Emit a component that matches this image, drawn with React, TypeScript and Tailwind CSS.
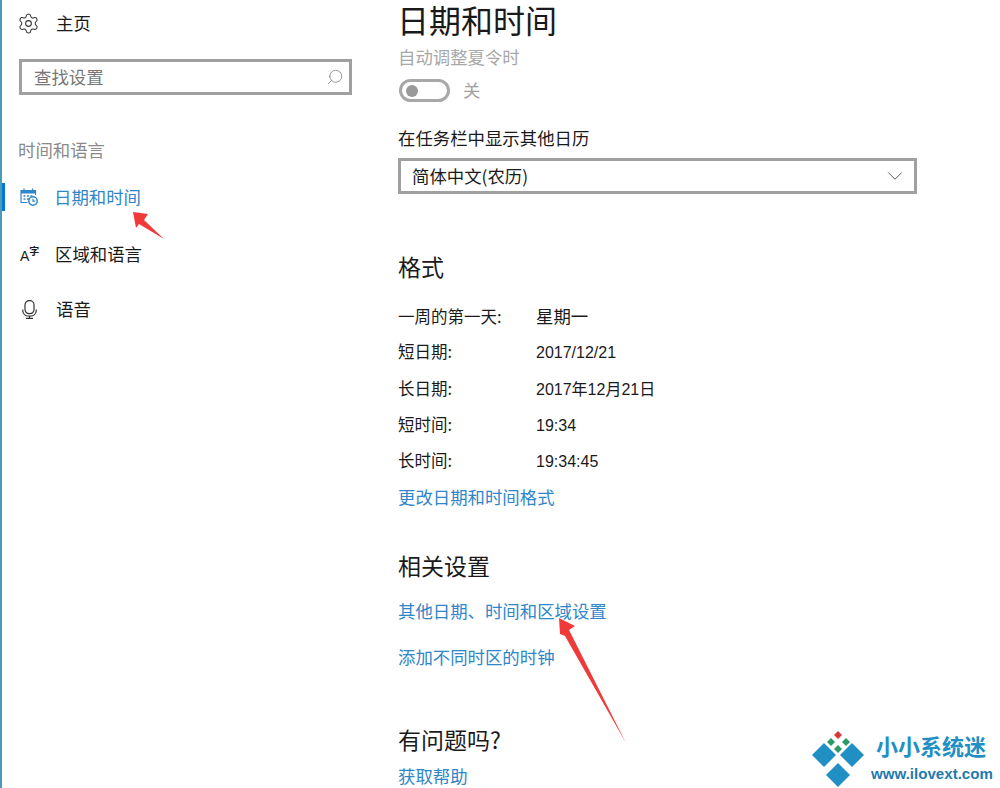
import { ChevronDown, Search, Settings } from "lucide-react"

const cjk = "font-['Noto_Sans_CJK_SC','Noto_Sans',sans-serif]"
const latin = "font-['Liberation_Sans','Noto_Sans_CJK_SC',sans-serif]"

const formats = [
  ["一周的第一天:", "星期一"],
  ["短日期:", "2017/12/21"],
  ["长日期:", "2017年12月21日"],
  ["短时间:", "19:34"],
  ["长时间:", "19:34:45"],
]

function CalendarIcon() {
  return (
    <svg width="18" height="18" viewBox="0 0 18 18" fill="none" stroke="#2f86c9" strokeWidth="1.2">
      <path d="M7.5 14.5H1V2.5H15.5V7" />
      <rect x="1" y="2.5" width="14.5" height="3" fill="#2f86c9" stroke="none" />
      <path d="M4 0.5v2.5M12.5 0.5v2.5" />
      <path d="M3.5 8h2M7 8h2M10.5 8h2M3.5 11h2M7 11h2" strokeWidth="1.5" />
      <circle cx="13" cy="13" r="4.2" fill="#fff" strokeWidth="1.5" />
      <path d="M13 10.8v2.4h2.2" />
    </svg>
  )
}

function MicIcon() {
  return (
    <svg width="15" height="19" viewBox="0 0 15 19" fill="none" stroke="#333" strokeWidth="1.2">
      <rect x="3" y="0.7" width="9" height="13" rx="4.2" />
      <path d="M0.8 9.5v1.5a5.5 5.5 0 0 0 5.5 5h2.4a5.5 5.5 0 0 0 5.5-5V9.5" />
      <path d="M7.5 16v2.4M4 18.4h7" />
    </svg>
  )
}

function LogoMark() {
  return (
    <svg width="52" height="56" viewBox="0 0 52 56">
      <polygon points="26,0 30,4 26,8 22,4" fill="#d63a3a" />
      <polygon points="19,7 23,11 19,15 15,11" fill="#2a9a66" />
      <polygon points="34,7 38,11 34,15 30,11" fill="#2a9a66" />
      <polygon points="26,14 30,18 26,22 22,18" fill="#2a9a66" />
      <polygon points="12,12 24,24 12,36 0,24" fill="#1f8fc4" />
      <polygon points="40,12 52,24 40,36 28,24" fill="#1f8fc4" />
      <polygon points="26,32 38,44 26,56 14,44" fill="#1f8fc4" />
    </svg>
  )
}

export default function App() {
  return (
    <div className={`relative flex h-[788px] w-[1000px] overflow-hidden bg-white text-[17.4px] text-[#1a1a1a] ${cjk}`}>
      {/* sidebar */}
      <aside className="w-[398px] shrink-0 border-l-2 border-[#4a9ab8]">
        <div className="mt-[11px] flex h-6 items-center pl-[15px]">
          <Settings size={23} strokeWidth={1.1} className="text-[#333]" />
          <span className="mb-[1px] ml-[16px] leading-6">主页</span>
        </div>
        <div className="ml-[17px] mt-6 flex h-9 w-[333px] items-center justify-between border-[3px] border-[#a0a0a0] pl-3 pr-[5px] text-[#777]">
          <span className="mb-[1px] leading-6">查找设置</span>
          <Search size={18} strokeWidth={1} className="-scale-x-100 text-[#777]" />
        </div>
        <div className="ml-4 mt-[43px] h-6 leading-[23px] text-[#8a8a8a]">时间和语言</div>
        <div className="mt-[21px] flex h-7 items-center border-l-[3px] border-[#0078d7] pl-[15px] text-[#2f86c9]">
          <CalendarIcon />
          <span className="mb-[1px] ml-[16px] leading-6">日期和时间</span>
        </div>
        <div className="mt-[29px] flex h-7 items-center pl-[18px]">
          <span className="flex w-[18px] items-end leading-none">
            <span className={`text-[14px] ${latin}`}>A</span>
            <span className="mb-[7px] text-[10px] font-bold">字</span>
          </span>
          <span className="mb-[1px] ml-[17px] leading-6">区域和语言</span>
        </div>
        <div className="mt-[27px] flex h-7 items-center pl-[20px]">
          <MicIcon />
          <span className="mb-[1px] ml-[19px] leading-6">语音</span>
        </div>
      </aside>

      {/* main column */}
      <main className="w-[520px]">
        <h1 className={`-ml-[1px] h-[42px] text-[32px] leading-[44px] ${latin}`}>日期和时间</h1>
        <div className="mt-[3px] h-6 leading-[23px] text-[#a8a8a8]">自动调整夏令时</div>
        <div className="mt-[10px] flex h-[23px] items-center">
          <div className="ml-[1px] flex h-[23px] w-[51px] items-center rounded-full border-[3px] border-[#a8a8a8] pl-[4px]">
            <div className="h-3 w-3 rounded-full bg-[#9a9a9a]" />
          </div>
          <span className="mb-[1px] ml-[13px] leading-6 text-[#a0a0a0]">关</span>
        </div>
        <div className="mt-6 h-6 leading-[23px]">在任务栏中显示其他日历</div>
        <div className="mt-2 flex h-9 w-[519px] items-center justify-between border-[3px] border-[#a0a0a0] pl-[11px] pr-[6px]">
          <span className="mb-[1px] leading-6">简体中文(农历)</span>
          <ChevronDown size={26} strokeWidth={0.9} className="text-[#555]" />
        </div>

        <h2 className="mt-[58px] h-8 text-[23px] leading-[28px]">格式</h2>
        <div className="mt-5 flex flex-col gap-[12.25px] text-[16.5px]">
          {formats.map(([k, v]) => (
            <div key={k} className="flex h-6 items-baseline leading-[23px]">
              <span className="w-[138px]">{k}</span>
              <span className={v === "星期一" ? "text-[17.4px]" : `text-[16px] ${latin}`}>{v}</span>
            </div>
          ))}
          <a className="h-6 text-[17.4px] leading-[23px] text-[#2f86c9]">更改日期和时间格式</a>
        </div>

        <h2 className="mt-[42px] h-8 text-[23px] leading-[28px]">相关设置</h2>
        <a className="mt-4 block h-6 leading-[23px] text-[#2f86c9]">其他日期、时间和区域设置</a>
        <a className="mt-[22px] block h-6 leading-[23px] text-[#2f86c9]">添加不同时区的时钟</a>

        <h2 className="mt-14 h-8 text-[23px] leading-[28px]">有问题吗?</h2>
        <a className="mt-[7px] block h-6 leading-[23px] text-[#2f86c9]">获取帮助</a>
      </main>

      {/* red annotation arrows drawn on top of the screenshot */}
      <svg className="pointer-events-none absolute left-0 top-0" width="1000" height="788">
        <polygon points="133,212 148,214 144,220 164,239 139,224 136,228" fill="#f03a3a" />
        <polygon points="559,618 575,626 569,630 626,743 565,636 560,634" fill="#f03a3a" />
      </svg>

      {/* watermark */}
      <div className="absolute left-[812px] top-[731px] flex">
        <LogoMark />
        <div className="ml-[7px] flex flex-col pt-[1px]">
          <span className="ml-[5px] text-[22px] font-bold leading-[27px] text-[#1f8fc4]">小小系统迷</span>
          <span className={`mt-[6px] text-[15.1px] font-bold leading-[17px] text-[#1f7ab0] ${latin}`}>www.ilovext.com</span>
        </div>
      </div>
    </div>
  )
}
